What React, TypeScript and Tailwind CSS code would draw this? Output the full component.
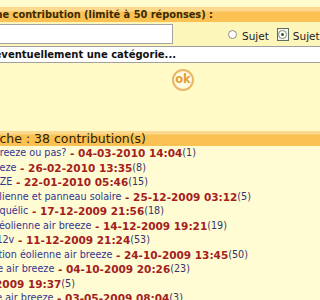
import React from "react";

type Row = { title: string; date: string; count: string; end: number };

const rows: Row[] = [
  { title: "Air breeze ou pas?", date: "04-03-2010 14:04", count: "1", end: 196 },
  { title: "Air breeze", date: "26-02-2010 13:35", count: "8", end: 146 },
  { title: "AIR BREEZE", date: "22-01-2010 05:46", count: "15", end: 148 },
  { title: "Mât pour éolienne et panneau solaire", date: "25-12-2009 03:12", count: "5", end: 251 },
  { title: "Régulateur Antiquélic", date: "17-12-2009 21:56", count: "18", end: 164 },
  { title: "Montage de l'éolienne air breeze", date: "14-12-2009 19:21", count: "19", end: 227 },
  { title: "Air breeze 12v", date: "11-12-2009 21:24", count: "53", end: 150 },
  { title: "Installation éolienne air breeze", date: "24-10-2009 13:45", count: "50", end: 248 },
  { title: "Fixation de l'éolienne air breeze", date: "04-10-2009 20:26", count: "23", end: 190 },
  { title: "Eolienne air breeze", date: "17-09-2009 19:37", count: "5", end: 75 },
  { title: "Prix de l'éolienne air breeze", date: "03-05-2009 08:04", count: "3", end: 183 },
];

export default function App() {
  return (
    <div className="w-[320px] h-[300px] overflow-hidden bg-[#fffbc9] font-['DejaVu_Sans',Verdana,sans-serif]">
      <div className="h-[7px] bg-[#fffbcd]" />
      {/* header 1 */}
      <div className="h-[15px] flex bg-[linear-gradient(to_bottom,#fdd88f_0px,#fdd88f_4px,#fbc152_5px,#fbc152_100%)]">
        <div className="w-[213px] shrink-0 flex justify-end overflow-hidden whitespace-nowrap text-[9.8px] font-bold leading-[15px] text-[#3a2a06]">
          Saisissez une contribution (limité à 50 réponses) :
        </div>
      </div>
      {/* input row */}
      <div className="h-[24px] flex items-center bg-[#fdf6bb]">
        <div className="w-[173px] h-[20px] shrink-0 bg-white border border-l-0 border-[#a3a3a3]" />
        <div className="ml-[55px] mt-[1px] w-[9px] h-[9px] rounded-full border border-[#8c8c8c] bg-white shrink-0" />
        <span className="ml-[5px] mt-[3px] text-[10.5px] leading-[12px] text-[#222] whitespace-nowrap">Sujet</span>
        <div className="ml-[8px] w-[12px] h-[13px] shrink-0 border border-[#5f6f5f] flex items-center justify-center bg-[#f4f4ec]">
          <div className="w-[9px] h-[9px] rounded-full border border-[#7d8a7d] bg-white flex items-center justify-center">
            <div className="w-[3px] h-[3px] rounded-full bg-[#2f5a2f]" />
          </div>
        </div>
        <span className="ml-[4px] mt-[3px] text-[10.5px] leading-[12px] text-[#222] whitespace-nowrap">Sujet</span>
      </div>
      {/* select */}
      <div className="h-[17px] flex bg-white border-y border-[#a0a0a0]">
        <div className="w-[176px] shrink-0 flex justify-end overflow-hidden whitespace-nowrap text-[10px] font-bold leading-[16px] text-[#111]">
          Choisissez éventuellement une catégorie...
        </div>
      </div>
      {/* ok */}
      <div className="h-[68px] pt-[6px] pl-[172px] bg-[#fffac6]">
        <div className="w-[22px] h-[22px] rounded-full border-2 border-[#eab662] bg-[#fffbe2] flex items-center justify-center">
          <span className="text-[11.5px] font-bold leading-none text-[#e3a038] -mt-[1px]">ok</span>
        </div>
      </div>
      {/* header 2 */}
      <div className="h-[15px] flex bg-[linear-gradient(to_bottom,#fdd88f_0px,#fdd88f_3px,#fbc152_4px,#fbc152_100%)]">
        <div className="w-[146px] shrink-0 flex justify-end overflow-hidden whitespace-nowrap text-[12.5px] leading-[15px] text-[#2e2204]">
          Résultat de votre recherche : 38 contribution(s)
        </div>
      </div>
      {/* list */}
      <div className="bg-[#fffcd4] text-[10.7px] leading-[14.5px]">
        {rows.map((r, i) => (
          <div key={i} className="flex">
            <div
              className="shrink-0 flex justify-end overflow-hidden whitespace-nowrap"
              style={{ width: r.end }}
            >
              <span className="text-[#34348f] font-['DejaVu_Sans_Condensed','DejaVu_Sans',sans-serif]">{r.title}</span>
              <span className="font-bold text-[10.5px] text-[#a4201c]">&nbsp;- {r.date}</span>
              <span className="text-[#34346a] font-['DejaVu_Sans_Condensed','DejaVu_Sans',sans-serif]">({r.count})</span>
            </div>
          </div>
        ))}
      </div>
    </div>
  );
}
